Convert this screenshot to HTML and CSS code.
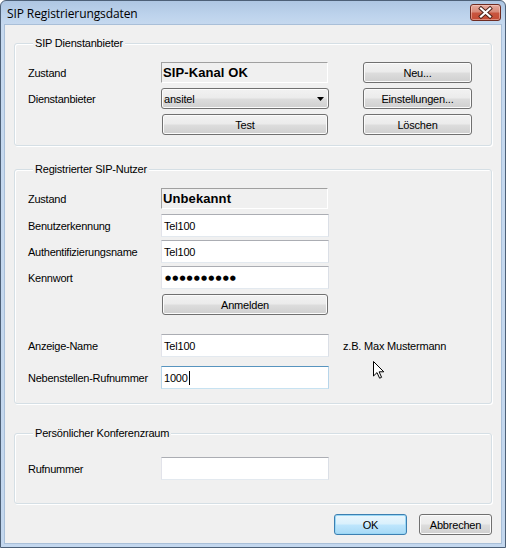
FILE: index.html
```html
<!DOCTYPE html>
<html lang="de">
<head>
<meta charset="utf-8">
<title>SIP Registrierungsdaten</title>
<link rel="stylesheet" href="styles.css">
</head>
<body>
<div class="window">
  <div class="titlebar">
    <span class="title">SIP Registrierungsdaten</span>
    <div class="close">
      <svg width="29" height="15" viewBox="0 0 29 15">
        <path d="M10 3.5 L19 11.5 M19 3.5 L10 11.5" stroke="#4a2018" stroke-width="4" stroke-linecap="square"/>
        <path d="M10 3.5 L19 11.5 M19 3.5 L10 11.5" stroke="#ffffff" stroke-width="2.2" stroke-linecap="square"/>
      </svg>
    </div>
  </div>
  <div class="client">
    <div class="group g1">
      <div class="group-title">SIP Dienstanbieter</div>
      <div class="grid1">
        <div class="label">Zustand</div>
        <div class="status">SIP-Kanal OK</div>
        <div class="btn side">Neu...</div>
        <div class="label">Dienstanbieter</div>
        <div class="combo"><span>ansitel</span><svg class="arrow" width="7" height="4" viewBox="0 0 7 4"><path d="M0 0 H7 L3.5 4 Z" fill="#000"/></svg></div>
        <div class="btn side">Einstellungen...</div>
        <div></div>
        <div class="btn narrow">Test</div>
        <div class="btn side">Löschen</div>
      </div>
    </div>

    <div class="group g2">
      <div class="group-title">Registrierter SIP-Nutzer</div>
      <div class="row r-status">
        <div class="label">Zustand</div>
        <div class="status">Unbekannt</div>
      </div>
      <div class="row r-first">
        <div class="label">Benutzerkennung</div>
        <div class="input">Tel100</div>
      </div>
      <div class="row r-next">
        <div class="label">Authentifizierungsname</div>
        <div class="input">Tel100</div>
      </div>
      <div class="row r-next">
        <div class="label">Kennwort</div>
        <div class="input pw">●●●●●●●●●●</div>
      </div>
      <div class="row r-btn">
        <div class="label"></div>
        <div class="btn narrow">Anmelden</div>
      </div>
      <div class="row r-name">
        <div class="label">Anzeige-Name</div>
        <div class="input">Tel100</div>
        <div class="hint">z.B. Max Mustermann</div>
      </div>
      <div class="row r-ext">
        <div class="label">Nebenstellen-Rufnummer</div>
        <div class="input focus">1000<span class="caret"></span></div>
      </div>
    </div>

    <div class="group g3">
      <div class="group-title">Persönlicher Konferenzraum</div>
      <div class="row r-conf">
        <div class="label">Rufnummer</div>
        <div class="input"></div>
      </div>
    </div>

    <div class="actions">
      <div class="btn default">OK</div>
      <div class="btn">Abbrechen</div>
    </div>
  </div>
  <svg class="cursor" width="13" height="20" viewBox="0 0 13 20">
    <path d="M1.5 1.5 V16 L5 12.6 L7.6 18.2 L9.6 17.3 L7.1 11.8 H11.8 Z" fill="#fff" stroke="#000" stroke-width="1" stroke-linejoin="miter"/>
  </svg>
</div>
</body>
</html>
```

FILE: styles.css
```css
html, body {
  margin: 0;
  padding: 0;
  background: #ffffff;
}

body {
  width: 506px;
  height: 548px;
  overflow: hidden;
}

.window {
  position: relative;
  box-sizing: border-box;
  width: 506px;
  height: 548px;
  border: 1px solid #4d6077;
  border-radius: 6px 6px 0 0;
  background: linear-gradient(#aec6e2 0px, #bdd3ec 14px, #c6d9ef 24px, #c3d7ee 100%);
  display: flex;
  flex-direction: column;
  font-family: "Liberation Sans", Arial, sans-serif;
  font-size: 11px;
  color: #000;
}

.titlebar {
  height: 24px;
  flex: none;
  display: flex;
  justify-content: space-between;
  align-items: flex-start;
  padding-left: 6px;
}

.title {
  font-family: "Open Sans", "Noto Sans", sans-serif;
  font-size: 12px;
  line-height: 16px;
  margin-top: 5px;
  letter-spacing: -0.1px;
  color: #000;
}

.close {
  margin-top: 3px;
  margin-right: 4px;
  box-sizing: border-box;
  width: 31px;
  height: 17px;
  border: 1px solid #6f2c22;
  border-radius: 3px;
  background: linear-gradient(#e6aa9d 0%, #d88a79 45%, #c8553f 55%, #c44b34 100%);
  box-shadow: inset 0 0 0 1px rgba(255, 220, 210, 0.45);
}

.close svg {
  display: block;
}

.client {
  flex: 1;
  margin: 0 4px 4px 4px;
  background: #f0f0f0;
  padding: 0 9px;
  box-shadow: 0 0 0 1px #a9bfd8;
  display: flex;
  flex-direction: column;
}

.group {
  border: 1px solid #d5dfe5;
  border-radius: 3px;
  box-shadow: inset 1px 1px 0 #ffffff, 1px 1px 0 #ffffff;
  padding: 0 0 0 13px;
}

.group-title {
  margin: -8px 0 0 5px;
  padding: 0 2px;
  width: max-content;
  line-height: 14px;
  background: #f0f0f0;
  letter-spacing: -0.2px;
}

.g1 {
  margin-top: 18px;
  padding-bottom: 10px;
}

.g2 {
  margin-top: 23px;
  padding-bottom: 14px;
}

.g3 {
  margin-top: 29px;
  padding-bottom: 23px;
}

.grid1 {
  margin-top: 12px;
  display: grid;
  grid-template-columns: 133px 202px 109px;
  grid-auto-rows: 21px;
  row-gap: 5px;
  align-items: center;
}

.label {
  width: 133px;
  flex: none;
  letter-spacing: -0.25px;
  white-space: nowrap;
}

.status {
  box-sizing: border-box;
  width: 167px;
  height: 21px;
  border: 1px solid;
  border-color: #a0a0a0 #ffffff #ffffff #a0a0a0;
  padding-left: 1px;
  font-weight: bold;
  font-size: 13px;
  line-height: 19px;
  letter-spacing: 0.1px;
}

.btn {
  box-sizing: border-box;
  height: 21px;
  border: 1px solid #707070;
  border-radius: 3px;
  background: linear-gradient(#f2f2f2 0%, #ebebeb 48%, #dddddd 52%, #cfcfcf 100%);
  box-shadow: inset 0 0 0 1px #fbfbfb;
  display: flex;
  align-items: center;
  justify-content: center;
  letter-spacing: -0.2px;
  white-space: nowrap;
}

.side {
  width: 109px;
}

.narrow {
  width: 166px;
  margin-left: 1px;
}

.combo {
  box-sizing: border-box;
  width: 168px;
  height: 21px;
  border: 1px solid #707070;
  border-radius: 3px;
  background: linear-gradient(#f2f2f2 0%, #ebebeb 48%, #dddddd 52%, #cfcfcf 100%);
  box-shadow: inset 0 0 0 1px #fbfbfb;
  display: flex;
  align-items: center;
  justify-content: space-between;
  padding: 0 4px 0 2px;
  letter-spacing: -0.2px;
}

.arrow {
  display: block;
}

.row {
  display: flex;
  align-items: center;
}

.r-status { margin-top: 12px; }
.r-first { margin-top: 5px; }
.r-next { margin-top: 3px; }
.r-btn { margin-top: 5px; }
.r-name { margin-top: 19px; }
.r-ext { margin-top: 9px; }
.r-conf { margin-top: 17px; }

.input {
  box-sizing: border-box;
  width: 168px;
  height: 23px;
  border: 1px solid;
  border-color: #abadb3 #dbdfe6 #e3e9ef #e2e3ea;
  background: #ffffff;
  padding-left: 2px;
  display: flex;
  align-items: center;
  letter-spacing: -0.2px;
}

.input.focus {
  border-color: #5794bf #b7d5ea #c7e2f1 #b7d5ea;
}

.pw {
  font-family: "DejaVu Sans", sans-serif;
  font-size: 7px;
  letter-spacing: 1.1px;
  padding-left: 3px;
}

.caret {
  display: inline-block;
  width: 1px;
  height: 14px;
  background: #000;
  margin-left: 1px;
}

.hint {
  margin-left: 14px;
  letter-spacing: -0.2px;
  white-space: nowrap;
}

.actions {
  margin-top: 10px;
  display: flex;
  justify-content: flex-end;
  gap: 12px;
}

.actions .btn {
  width: 73px;
}

.actions .btn.default {
  border-color: #3c7fb1;
  background: linear-gradient(#eaf6fd 0%, #d9f0fc 48%, #bee6fd 52%, #a7d9f5 100%);
  box-shadow: inset 0 0 0 1px #9ad7f5;
}

.cursor {
  position: absolute;
  left: 371px;
  top: 359px;
}
```
